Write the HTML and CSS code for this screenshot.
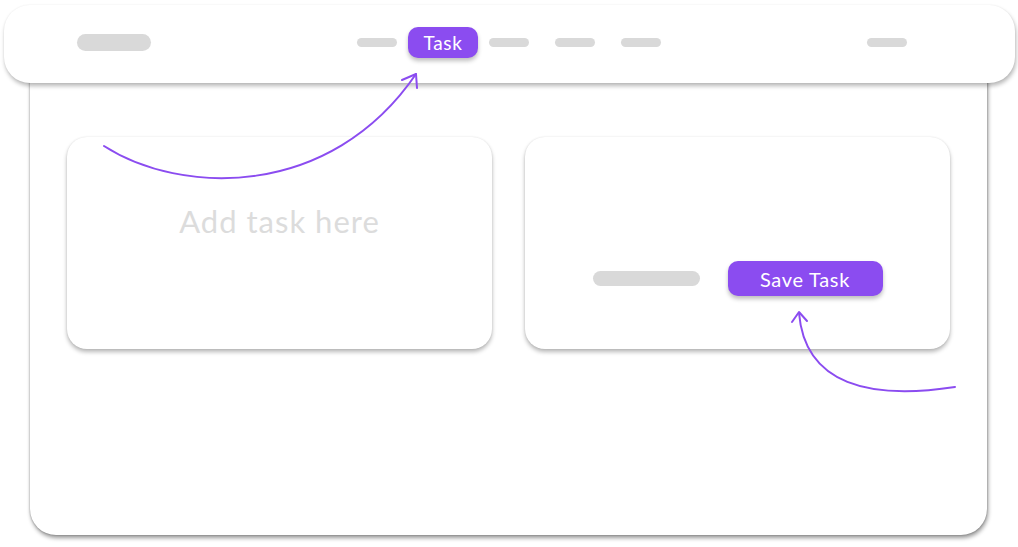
FILE: index.html
```html
<!DOCTYPE html>
<html>
<head>
<meta charset="utf-8">
<link rel="stylesheet" href="styles.css">
</head>
<body>
<div class="page">
  <header class="nav">
    <span class="logo-pill"></span>
    <nav class="menu">
      <span class="menu-pill"></span>
      <span class="menu-btn">Task</span>
      <span class="menu-pill"></span>
      <span class="menu-pill wide-gap"></span>
      <span class="menu-pill wide-gap"></span>
    </nav>
    <span class="menu-pill right-pill"></span>
  </header>
  <main class="frame">
    <section class="card card-input">
      <p class="placeholder">Add task here</p>
    </section>
    <section class="card card-actions">
      <span class="action-pill"></span>
      <button class="save-btn">Save Task</button>
    </section>
  </main>
  <svg class="arrows" width="1018" height="547" viewBox="0 0 1018 547">
    <path d="M104 146 C 180 195, 330 200, 416 74" />
    <path d="M402 80 L416 74 L417 88" />
    <path d="M955 387 C 870 400, 805 385, 799 313" />
    <path d="M792 322 L799 312 L807 321" />
  </svg>
</div>
</body>
</html>
```
FILE: styles.css
```css
* { box-sizing: border-box; }
html, body {
  margin: 0;
  padding: 0;
  background: #ffffff;
  font-family: "Lato", "Noto Sans", sans-serif;
}
body { width: 1018px; height: 547px; overflow: hidden; }
.page {
  position: relative;
  width: 1018px;
  height: 547px;
  padding-top: 5px;
}
.nav {
  position: relative;
  z-index: 2;
  margin: 0 3px 0 4px;
  height: 78px;
  background: #ffffff;
  border-radius: 26px;
  box-shadow: 1px 3px 4px rgba(0,0,0,0.28), 0 0 2px rgba(0,0,0,0.06);
  display: flex;
  align-items: center;
  padding: 0 108px 3px 73px;
}
.logo-pill {
  width: 74px;
  height: 17px;
  border-radius: 9px;
  background: #d9d9d9;
}
.menu {
  display: flex;
  align-items: center;
  margin-left: 206px;
}
.menu-pill {
  width: 40px;
  height: 9px;
  border-radius: 5px;
  background: #d9d9d9;
}
.menu-pill.wide-gap { margin-left: 26px; }
.menu-btn {
  margin: 0 11px;
  width: 70px;
  height: 31px;
  border-radius: 10px;
  background: #8b4cf0;
  color: #ffffff;
  font-size: 19px;
  letter-spacing: 0.6px;
  display: flex;
  align-items: center;
  justify-content: center;
  box-shadow: 0 3px 4px rgba(0,0,0,0.25);
}
.right-pill { margin-left: auto; }
.frame {
  position: relative;
  z-index: 1;
  margin: -33px 0 0 30px;
  width: 957px;
  height: 485px;
  background: #ffffff;
  border-radius: 26px;
  box-shadow: 1px 3px 4px rgba(0,0,0,0.4), 0 0 2px rgba(0,0,0,0.35);
  padding: 87px 37px 0 37px;
  display: flex;
  gap: 33px;
  align-items: flex-start;
}
.card {
  width: 425px;
  height: 212px;
  background: #ffffff;
  border-radius: 20px;
  box-shadow: 0 3px 4px rgba(0,0,0,0.28), 0 0 2px rgba(0,0,0,0.1);
}
.card-input {
  padding-top: 64px;
}
.placeholder {
  margin: 0;
  text-align: center;
  font-size: 31px;
  letter-spacing: 1px;
  line-height: 40px;
  color: #dcdcdc;
}
.card-actions {
  display: flex;
  justify-content: center;
  gap: 28px;
  padding-top: 124px;
  align-items: flex-start;
}
.action-pill {
  margin-top: 10px;
  width: 107px;
  height: 15px;
  border-radius: 8px;
  background: #d9d9d9;
}
.save-btn {
  width: 155px;
  height: 35px;
  border: 0;
  border-radius: 10px;
  background: #8b4cf0;
  color: #ffffff;
  font-family: inherit;
  font-size: 20px;
  letter-spacing: 0.7px;
  padding: 0;
  box-shadow: 0 3px 4px rgba(0,0,0,0.25);
}
.arrows {
  position: absolute;
  top: 0;
  left: 0;
  z-index: 3;
  fill: none;
  stroke: #8b4cf0;
  stroke-width: 2;
  stroke-linecap: round;
  stroke-linejoin: round;
  pointer-events: none;
}
```
